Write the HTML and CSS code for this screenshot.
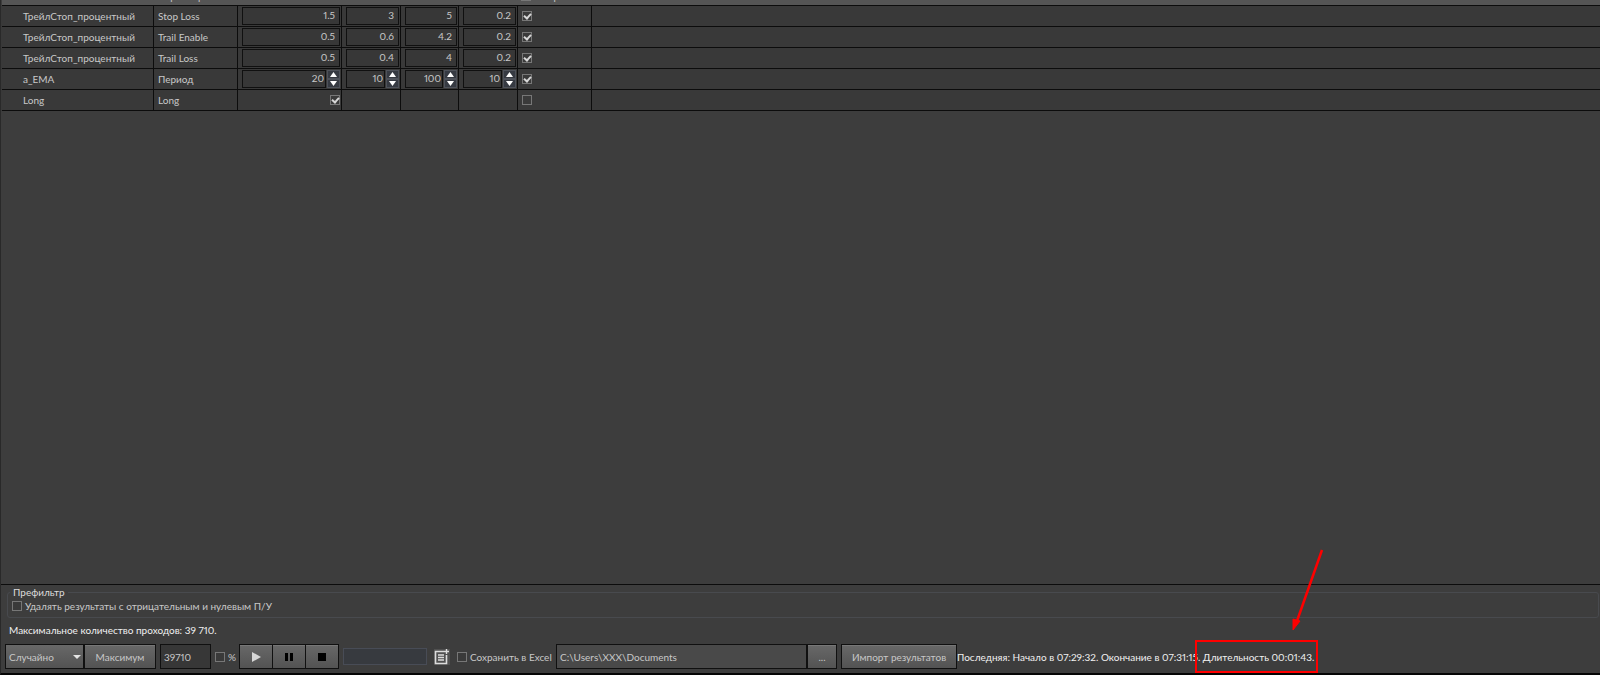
FILE: index.html
```html
<!DOCTYPE html>
<html lang="ru">
<head>
  <meta charset="UTF-8">
  <title>Оптимизация</title>
  <link rel="stylesheet" href="styles.css">
</head>
<body>
  <main class="params">
    <div class="params-head">
      <span class="head-name"></span>
      <span class="head-param">Параметр</span>
      <label class="head-check"><input type="checkbox"> Выбрать</label>
    </div>
    <table class="grid">
      <colgroup>
        <col class="col-name"><col class="col-param"><col class="col-value">
        <col class="col-min"><col class="col-max"><col class="col-min"><col class="col-use"><col>
      </colgroup>
      <tbody id="rows"></tbody>
    </table>
  </main>

  <section class="bottom">
    <fieldset class="prefilter">
      <legend>Префильтр</legend>
      <label class="check"><input type="checkbox"> Удалять результаты с отрицательным и нулевым П/У</label>
    </fieldset>

    <p class="passes">Максимальное количество проходов: 39 710.</p>

    <div class="toolbar">
      <div class="mode">
        <select aria-label="Режим">
          <option>Случайно</option>
        </select>
      </div>
      <button class="btn btn-max">Максимум</button>
      <input class="box count" type="text" value="39710" aria-label="Количество">
      <label class="check percent"><input type="checkbox"> %</label>
      <button class="btn btn-run" aria-label="Старт">
        <svg width="9" height="10" viewBox="0 0 9 10"><path d="M0 0L9 5L0 10Z" fill="#d6d6d6"/></svg>
      </button>
      <button class="btn btn-run" aria-label="Пауза">
        <svg width="8" height="8" viewBox="0 0 8 8"><path d="M0 0h3v8h-3zM5 0h3v8h-3z" fill="#000"/></svg>
      </button>
      <button class="btn btn-run" aria-label="Стоп">
        <svg width="8" height="8" viewBox="0 0 8 8"><path d="M0 0h8v8h-8z" fill="#000"/></svg>
      </button>
      <div class="progress"></div>
      <button class="btn-list" aria-label="Добавить в список">
        <svg width="16" height="16" viewBox="0 0 16 16" fill="none" stroke="#dcdcdc">
          <path d="M10 2.5H1.5V14.5H12.5V6" stroke-width="1.6"/>
          <path d="M4 6H10M4 8.5H10M4 11H10" stroke-width="1.3"/>
          <path d="M12.5 0V5M10 2.5H15" stroke-width="1.4"/>
        </svg>
      </button>
      <label class="check excel"><input type="checkbox"> Сохранить в Excel</label>
      <input class="box path" type="text" value="C:\Users\XXX\Documents" aria-label="Папка">
      <button class="btn btn-dots">...</button>
      <button class="btn btn-import">Импорт результатов</button>
      <div class="status">Последняя: Начало в 07:29:32. Окончание в 07:31:15. <span class="duration">Длительность 00:01:43.
        <svg class="arrow" width="32" height="84" viewBox="0 0 32 84">
          <path d="M30 2L5 73" stroke="#f00" stroke-width="2.5" fill="none"/>
          <path d="M1 82L1 71L8 73Z" fill="#f00" stroke="#f00"/>
        </svg>
      </span></div>
    </div>
  </section>

  <script src="script.js"></script>
</body>
</html>
```
FILE: styles.css
```css
* {
  box-sizing: border-box;
}

body {
  margin: 0;
  min-height: 100vh;
  display: flex;
  flex-direction: column;
  background: #3d3d3d;
  border-left: 1px solid #292929;
  border-bottom: 2px solid #050505;
  color: #c8c8c8;
  font-family: Lato, "Noto Sans", sans-serif;
  font-size: 10px;
  font-variant-numeric: proportional-nums;
  line-height: 14px;
  overflow: hidden;
}

input, button, select {
  font: inherit;
  color: inherit;
  margin: 0;
}

button {
  padding: 0;
}

/* checkboxes */
input[type="checkbox"] {
  appearance: none;
  flex: none;
  display: block;
  position: relative;
  width: 10px;
  height: 10px;
  border: 1px solid #777;
  background: #3a3a3a;
}

input[type="checkbox"]:checked::after {
  content: "";
  position: absolute;
  left: 2px;
  top: 0;
  width: 3px;
  height: 5px;
  border: solid #d8d8d8;
  border-width: 0 2px 2px 0;
  transform: rotate(42deg);
}

.check {
  display: flex;
  align-items: center;
  gap: 3px;
  white-space: nowrap;
}

/* parameters */
.params {
  flex: 1;
}

.params-head {
  display: flex;
  align-items: flex-end;
  height: 6px;
  margin-left: 1px;
  padding-bottom: 2px;
  overflow: hidden;
  background: #555;
  border-bottom: 1px solid #0c0c0c;
}

.head-name {
  width: 152px;
}

.head-param {
  width: 363px;
  padding-left: 4px;
}

.head-check {
  display: flex;
  align-items: center;
  gap: 3px;
  padding-left: 4px;
}

.grid {
  width: 100%;
  padding-left: 1px;
  table-layout: fixed;
  border-collapse: separate;
  border-spacing: 0;
  background: #393939;
}

.col-name { width: 152px; }
.col-param { width: 84px; }
.col-value { width: 104px; }
.col-min { width: 59px; }
.col-max { width: 58px; }
.col-use { width: 74px; }

.grid td {
  height: 21px;
  padding: 0 1px 0 4px;
  border-right: 1px solid #0c0c0c;
  border-bottom: 1px solid #0c0c0c;
  white-space: nowrap;
}

.grid td:first-child {
  padding-left: 21px;
}

.grid td:last-child {
  border-right: 0;
}

.grid .right {
  margin-left: auto;
}

.field {
  display: flex;
  gap: 1px;
}

.field input {
  flex: 1;
  min-width: 0;
  height: 18px;
  padding: 0 4px 2px;
  border: 1px solid #101010;
  background: #373737;
  text-align: right;
}

.field input:not(:last-child) {
  padding-right: 1px;
}

.spin {
  display: flex;
  flex-direction: column;
  width: 13px;
}

.spin button {
  display: flex;
  align-items: center;
  justify-content: center;
  height: 9px;
  border: 1px solid #4e525a;
  background: #363a42;
}

/* bottom panel */
.bottom {
  padding: 0 1px 4px 4px;
  border-top: 1px solid #0c0c0c;
}

.prefilter {
  margin: 0 0 0 2px;
  padding: 0 4px 4px;
  border: 1px solid #484a4e;
  border-radius: 3px;
}

.prefilter legend {
  padding: 0 3px;
  margin-left: -2px;
  color: #dcdcdc;
}

.passes {
  margin: 5px 4px 7px;
  color: #f0f0f0;
}

.toolbar {
  display: flex;
  align-items: center;
  height: 25px;
}

.btn {
  display: flex;
  align-items: center;
  justify-content: center;
  flex: none;
  height: 25px;
  border: 1px solid #101010;
  background: linear-gradient(#686868, #535353);
  box-shadow: inset 0 1px #777;
}

.mode {
  position: relative;
  flex: none;
  width: 79px;
}

.mode select {
  appearance: none;
  display: block;
  width: 100%;
  height: 25px;
  padding: 0 3px;
  border: 1px solid #101010;
  border-radius: 0;
  background: linear-gradient(#686868, #535353);
}

.mode::after {
  content: "";
  position: absolute;
  right: 3px;
  top: 11px;
  border: 4px solid transparent;
  border-top: 4px solid #e4e4e4;
  pointer-events: none;
}

.box {
  flex: none;
  height: 25px;
  padding: 0 3px;
  border: 1px solid #101010;
  background: #373737;
}

.btn-max { width: 72px; }
.btn-run { width: 34px; margin-right: -1px; }
.btn-dots { width: 30px; }
.btn-import { width: 116px; margin-left: 4px; }

.count {
  width: 51px;
  margin-left: 4px;
}

.percent {
  width: 24px;
  margin-left: 4px;
}

.progress {
  flex: none;
  width: 84px;
  height: 17px;
  margin-left: 5px;
  border: 1px solid #484c56;
  background: #373a3f;
}

.btn-list {
  display: flex;
  margin-left: 7px;
  border: 0;
  background: #505050;
}

.excel {
  width: 99px;
  margin-left: 7px;
}

.path {
  width: 251px;
  background: #494949;
}

.status {
  color: #f0f0f0;
  white-space: nowrap;
}

/* marker round the duration */
.duration {
  display: inline-block;
  position: relative;
}

.duration::before {
  content: "";
  position: absolute;
  left: -8px;
  right: -4px;
  top: -10px;
  height: 29px;
  border: 2px solid #f00;
}

.arrow {
  position: absolute;
  right: -10px;
  bottom: 32px;
}
```
FILE: script.js
```js
const rows = [
  ["ТрейлСтоп_процентный", "Stop Loss", ["1.5", "3", "5", "0.2"]],
  ["ТрейлСтоп_процентный", "Trail Enable", ["0.5", "0.6", "4.2", "0.2"]],
  ["ТрейлСтоп_процентный", "Trail Loss", ["0.5", "0.4", "4", "0.2"]],
  ["a_EMA", "Период", ["20", "10", "100", "10"], true]
]

const spin = `<span class="spin">
  <button aria-label="Больше"><svg width="7" height="5" viewBox="0 0 7 5"><path d="M0 5L3.5 0L7 5Z" fill="#fff"/></svg></button>
  <button aria-label="Меньше"><svg width="7" height="5" viewBox="0 0 7 5"><path d="M0 0L3.5 5L7 0Z" fill="#fff"/></svg></button>
</span>`

let html = ""
for (const [name, param, values, isInt] of rows) {
  html += `<tr><td>${name}</td><td>${param}</td>`
  for (const v of values) {
    html += `<td><div class="field"><input type="text" value="${v}" aria-label="${param}">${isInt ? spin : ""}</div></td>`
  }
  html += `<td><input type="checkbox" checked aria-label="${param}"></td><td></td></tr>`
}

html += `<tr><td>Long</td><td>Long</td>
  <td><input class="right" type="checkbox" checked aria-label="Long"></td><td></td><td></td><td></td>
  <td><input type="checkbox" aria-label="Long"></td><td></td></tr>`

document.getElementById("rows").innerHTML = html
```
